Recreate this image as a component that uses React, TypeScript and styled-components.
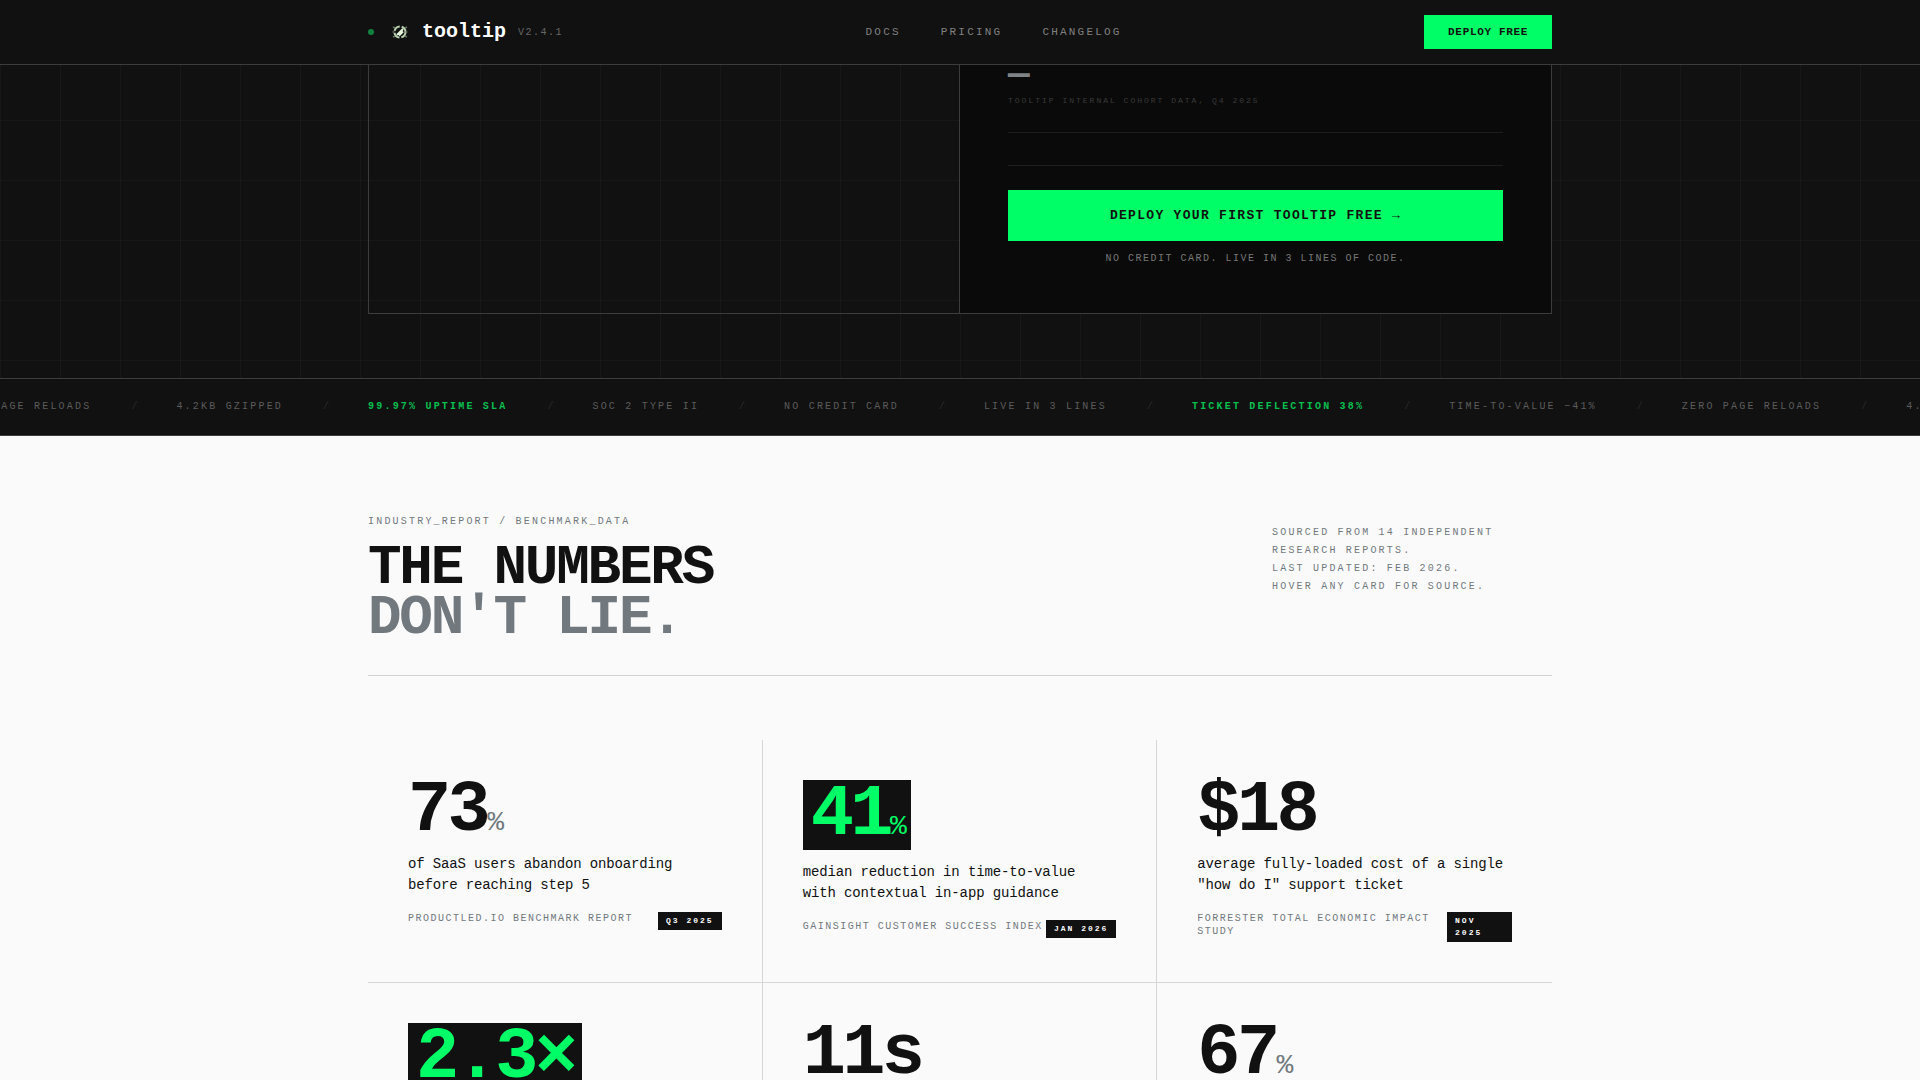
import React from "react";
import styled, { createGlobalStyle, css } from "styled-components";

const ink = "#111111";
const green = "#00ff66";
const paper = "#fafafa";
const steel = "#71797e";
const line = "#3c3c3c";

const GlobalStyle = createGlobalStyle`
  *, *::before, *::after { box-sizing: border-box; }
  body {
    margin: 0;
    background: ${paper};
    color: ${ink};
    font-family: "Liberation Mono", "Courier New", monospace;
    overflow-x: hidden;
  }
  h2, p, ul { margin: 0; padding: 0; }
  ul { list-style: none; }
`;

const Container = styled.div`
  width: 100%;
  max-width: 1280px;
  margin: 0 auto;
  padding: 0 48px;
`;

const Nav = styled.header`
  position: fixed;
  inset: 0 0 auto 0;
  z-index: 10;
  background: ${ink};
  border-bottom: 1px solid ${line};
`;

const NavInner = styled(Container)`
  display: flex;
  align-items: center;
  justify-content: space-between;
  height: 64px;
`;

const Brand = styled.a`
  display: flex;
  align-items: center;
  gap: 12px;
  color: #ffffff;
  text-decoration: none;
`;

const StatusDot = styled.span`
  width: 6px;
  height: 6px;
  margin-right: 4px;
  border-radius: 50%;
  background: #12833f;
`;

const Wordmark = styled.span`
  font-size: 20px;
  font-weight: 700;
  line-height: 24px;
`;

const Version = styled.span`
  color: #666666;
  font-size: 10px;
  letter-spacing: 0.15em;
`;

const NavLinks = styled.nav`
  display: flex;
  gap: 40px;
`;

const NavLink = styled.a`
  color: #808080;
  font-size: 11px;
  letter-spacing: 0.2em;
  text-decoration: none;
`;

const Button = styled.button<{ $large?: boolean }>`
  border: 0;
  border-radius: 0;
  background: ${green};
  color: ${ink};
  font-family: inherit;
  font-weight: 700;
  cursor: pointer;
  ${({ $large }) =>
    $large
      ? css`
          width: 100%;
          padding: 18px 24px;
          font-size: 13px;
          line-height: 15px;
          letter-spacing: 0.1em;
        `
      : css`
          padding: 11px 24px;
          font-size: 11px;
          line-height: 12px;
          letter-spacing: 0.06em;
        `}
`;

const Hero = styled.section`
  padding: 65px 0 64px;
  background-color: ${ink};
  background-image:
    linear-gradient(rgba(255, 255, 255, 0.03) 1px, transparent 1px),
    linear-gradient(90deg, rgba(255, 255, 255, 0.03) 1px, transparent 1px);
  background-size: 60px 60px;
`;

const HeroCard = styled.div`
  display: grid;
  grid-template-columns: 1fr 1fr;
  border: 1px solid ${line};
  border-top: 0;
`;

const HeroPane = styled.div`
  border-right: 1px solid ${line};
`;

const HeroPanel = styled.div`
  padding: 0 48px 48px;
  background: #0a0a0a;
`;

const Pending = styled.p`
  color: #7f8387;
  font-size: 36px;
  font-weight: 700;
  line-height: 22px;
`;

const Cohort = styled.p`
  margin-top: 8px;
  padding-bottom: 25px;
  border-bottom: 1px solid #1d1d1d;
  color: #3a3a3a;
  font-size: 8px;
  line-height: 12px;
  letter-spacing: 0.25em;
`;

const Actions = styled.div`
  margin-top: 32px;
  padding-top: 24px;
  border-top: 1px solid #1d1d1d;
`;

const Note = styled.p`
  margin-top: 12px;
  color: #777777;
  font-size: 10px;
  line-height: 12px;
  letter-spacing: 0.15em;
  text-align: center;
`;

const Ticker = styled.div`
  overflow: hidden;
  background: ${ink};
  border-top: 1px solid ${line};
  border-bottom: 1px solid ${line};
`;

const TickerTrack = styled.ul`
  display: flex;
  align-items: center;
  gap: 40px;
  height: 56px;
  margin-left: -48px;
`;

const TickerItem = styled.li<{ $hot?: boolean }>`
  display: flex;
  flex: none;
  gap: 40px;
  color: ${({ $hot }) => ($hot ? "#09bf50" : "#5c5c5c")};
  font-size: 10px;
  font-weight: ${({ $hot }) => ($hot ? 700 : 400)};
  line-height: 12px;
  letter-spacing: 0.22em;
  white-space: nowrap;

  &::after {
    content: "/";
    width: 5px;
    color: #2a2a2a;
    font-weight: 400;
  }
`;

const Stats = styled.section`
  padding: 80px 0;
`;

const StatsHead = styled.div`
  display: flex;
  align-items: flex-start;
  justify-content: space-between;
  padding-bottom: 32px;
  margin-bottom: 64px;
  border-bottom: 1px solid #d0d2d3;
`;

const Eyebrow = styled.p`
  margin-bottom: 16px;
  color: ${steel};
  font-size: 10px;
  line-height: 11px;
  letter-spacing: 0.22em;
`;

const Title = styled.h2`
  font-size: 56px;
  font-weight: 700;
  line-height: 50px;
  letter-spacing: -0.04em;
`;

const Muted = styled.span`
  display: block;
  color: ${steel};
`;

const Sourcing = styled.p`
  width: 280px;
  padding-top: 8px;
  color: ${steel};
  font-size: 10px;
  line-height: 18px;
  letter-spacing: 0.22em;
`;

const Grid = styled.div`
  display: grid;
  grid-template-columns: repeat(3, 1fr);
`;

const Card = styled.article`
  padding: 40px;
  border-right: 1px solid #d4d6d7;
  border-bottom: 1px solid #d4d6d7;

  &:nth-child(3n) {
    border-right: 0;
  }
`;

const Figure = styled.div<{ $hot?: boolean }>`
  width: fit-content;
  margin-bottom: 12px;
  font-size: 72px;
  font-weight: 700;
  line-height: 62px;
  letter-spacing: -0.05em;
  ${({ $hot }) =>
    $hot &&
    css`
      padding: 4px 8px;
      background: ${ink};
      color: ${green};
    `}
`;

const Unit = styled.span<{ $hot?: boolean }>`
  color: ${({ $hot }) => ($hot ? green : steel)};
  font-size: 28px;
  font-weight: 400;
  line-height: 28px;
`;

const Claim = styled.p`
  margin-bottom: 16px;
  font-size: 14px;
  line-height: 21px;
  letter-spacing: -0.01em;
`;

const CardFoot = styled.div`
  display: flex;
  align-items: flex-start;
  justify-content: space-between;
`;

const Source = styled.span`
  color: ${steel};
  font-size: 10px;
  line-height: 13px;
  letter-spacing: 0.15em;
`;

const Badge = styled.span`
  padding: 3px 8px;
  background: ${ink};
  color: ${paper};
  font-size: 8px;
  font-weight: 700;
  line-height: 12px;
  letter-spacing: 0.25em;
`;

const LogoMark = () => (
  <svg width="20" height="20" viewBox="0 0 20 20" fill="none" aria-hidden="true">
    <circle cx="10" cy="10" r="5.5" stroke="#b9cfae" strokeWidth="2" strokeDasharray="7 2" />
    <path d="M7 13l6-6M9 13.500l4-4" stroke="#e4f5da" strokeWidth="2" />
    <path d="M3 5l2 1M17 5l-2 1M3 15l2-1M17 15l-2-1M2.500 10h2M15.500 10h2" stroke="#65705f" strokeWidth="1.500" />
  </svg>
);

const tickerItems = [
  { text: "ZERO PAGE RELOADS" },
  { text: "4.2KB GZIPPED" },
  { text: "99.97% UPTIME SLA", hot: true },
  { text: "SOC 2 TYPE II" },
  { text: "NO CREDIT CARD" },
  { text: "LIVE IN 3 LINES" },
  { text: "TICKET DEFLECTION 38%", hot: true },
  { text: "TIME-TO-VALUE −41%" },
  { text: "ZERO PAGE RELOADS" },
  { text: "4.2KB GZIPPED" },
];

type Stat = {
  value: string;
  unit?: string;
  hot?: boolean;
  claim?: string;
  source?: string;
  date?: string;
};

const stats: Stat[] = [
  {
    value: "73",
    unit: "%",
    claim: "of SaaS users abandon onboarding before reaching step 5",
    source: "PRODUCTLED.IO BENCHMARK REPORT",
    date: "Q3 2025",
  },
  {
    value: "41",
    unit: "%",
    hot: true,
    claim: "median reduction in time-to-value with contextual in-app guidance",
    source: "GAINSIGHT CUSTOMER SUCCESS INDEX",
    date: "JAN 2026",
  },
  {
    value: "$18",
    claim: 'average fully-loaded cost of a single "how do I" support ticket',
    source: "FORRESTER TOTAL ECONOMIC IMPACT STUDY",
    date: "NOV 2025",
  },
  { value: "2.3×", hot: true },
  { value: "11s" },
  { value: "67", unit: "%" },
];

export default function App() {
  return (
    <>
      <GlobalStyle />
      <Nav>
        <NavInner>
          <Brand href="#">
            <StatusDot />
            <LogoMark />
            <Wordmark>tooltip</Wordmark>
            <Version>V2.4.1</Version>
          </Brand>
          <NavLinks>
            <NavLink href="#docs">DOCS</NavLink>
            <NavLink href="#pricing">PRICING</NavLink>
            <NavLink href="#changelog">CHANGELOG</NavLink>
          </NavLinks>
          <Button type="button">DEPLOY FREE</Button>
        </NavInner>
      </Nav>
      <main>
        <Hero>
          <Container>
            <HeroCard>
              <HeroPane />
              <HeroPanel>
                <Pending>—</Pending>
                <Cohort>TOOLTIP INTERNAL COHORT DATA, Q4 2025</Cohort>
                <Actions>
                  <Button type="button" $large>
                    DEPLOY YOUR FIRST TOOLTIP FREE →
                  </Button>
                  <Note>NO CREDIT CARD. LIVE IN 3 LINES OF CODE.</Note>
                </Actions>
              </HeroPanel>
            </HeroCard>
          </Container>
        </Hero>
        <Ticker>
          <TickerTrack>
            {tickerItems.map((item, i) => (
              <TickerItem key={i} $hot={item.hot}>
                {item.text}
              </TickerItem>
            ))}
          </TickerTrack>
        </Ticker>
        <Stats>
          <Container>
            <StatsHead>
              <div>
                <Eyebrow>INDUSTRY_REPORT / BENCHMARK_DATA</Eyebrow>
                <Title>
                  THE NUMBERS
                  <Muted>DON'T LIE.</Muted>
                </Title>
              </div>
              <Sourcing>
                SOURCED FROM 14 INDEPENDENT RESEARCH REPORTS.
                <br />
                LAST UPDATED: FEB 2026.
                <br />
                HOVER ANY CARD FOR SOURCE.
              </Sourcing>
            </StatsHead>
            <Grid>
              {stats.map((s) => (
                <Card key={s.value}>
                  <Figure $hot={s.hot}>
                    {s.value}
                    {s.unit && <Unit $hot={s.hot}>{s.unit}</Unit>}
                  </Figure>
                  {s.claim && <Claim>{s.claim}</Claim>}
                  {s.source && (
                    <CardFoot>
                      <Source>{s.source}</Source>
                      <Badge>{s.date}</Badge>
                    </CardFoot>
                  )}
                </Card>
              ))}
            </Grid>
          </Container>
        </Stats>
      </main>
    </>
  );
}
